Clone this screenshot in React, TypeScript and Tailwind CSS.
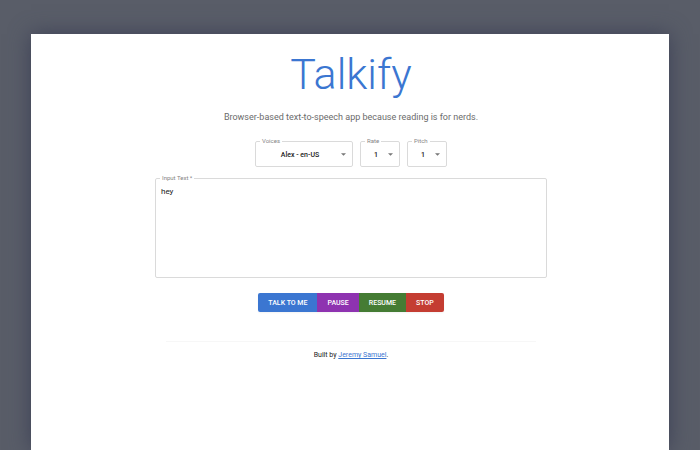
import { ReactNode, useState } from "react";

type FieldProps = { id: string; label: string; className?: string; children: ReactNode };

function Field({ id, label, className = "", children }: FieldProps) {
  return (
    <fieldset className={`min-w-0 rounded-xs border border-[#dadada] ${className}`}>
      <legend className="ml-1 px-0.5 text-[6px] leading-[8px] text-[#858585]">
        <label htmlFor={id} className="block">
          {label}
        </label>
      </legend>
      {children}
    </fieldset>
  );
}

type PickerProps = { id: string; label: string; options: string[]; className: string };

function Picker({ id, label, options, className }: PickerProps) {
  const [value, setValue] = useState(options[0]);
  return (
    <Field id={id} label={label} className={className}>
      <div className="relative">
        <select
          id={id}
          value={value}
          onChange={(e) => setValue(e.target.value)}
          className="block h-[21px] w-full appearance-none bg-transparent pr-3 pl-1 text-center text-[7px] font-medium text-[#222222] outline-none [text-align-last:center]"
        >
          {options.map((o) => (
            <option key={o}>{o}</option>
          ))}
        </select>
        <svg
          viewBox="0 0 6 3"
          className="pointer-events-none absolute top-2 right-1.5 h-[3px] w-[5px] fill-[#777777]"
          aria-hidden="true"
        >
          <path d="M0 0h6L3 3z" />
        </svg>
      </div>
    </Field>
  );
}

const actions = [
  { label: "Talk to me", color: "bg-[#3b76d1]" },
  { label: "Pause", color: "bg-[#8e33b0]" },
  { label: "Resume", color: "bg-[#457c34]" },
  { label: "Stop", color: "bg-[#c43d32]" },
];

export default function App() {
  const [text, setText] = useState("hey");
  return (
    <div className="flex min-h-screen bg-[#595d68] px-[31px] pt-[34px] font-['Roboto','Liberation_Sans',sans-serif]">
      <main className="flex flex-1 flex-col items-center bg-white pt-3 pr-8 pl-[34px] text-[#222222] shadow-[0_0_20px_0_#3c4056]">
        <h1 className="text-[43px] leading-[56px] font-light text-[#3b76d1]">Talkify</h1>
        <p className="mt-2 text-[9px] leading-[14px] text-[#6b6b6b]">
          Browser-based text-to-speech app because reading is for nerds.
        </p>
        <form className="flex w-full max-w-[392px] flex-col items-center" onSubmit={(e) => e.preventDefault()}>
          <div className="mt-[13px] flex gap-[7px]">
            <Picker id="voice" label="Voices" options={["Alex - en-US"]} className="w-[98px]" />
            <Picker id="rate" label="Rate" options={["1", "1.5", "2"]} className="w-[40px]" />
            <Picker id="pitch" label="Pitch" options={["1", "1.5", "2"]} className="w-[40px]" />
          </div>
          <Field id="input-text" label="Input Text *" className="mt-[7px] w-full">
            <textarea
              id="input-text"
              required
              value={text}
              onChange={(e) => setText(e.target.value)}
              className="block h-[95px] w-full resize-none bg-transparent px-[5px] pt-[5px] text-[8px] leading-[10px] outline-none"
            />
          </Field>
          <div className="mt-[15px] flex overflow-hidden rounded-xs shadow-xs">
            {actions.map((a) => (
              <button
                key={a.label}
                type="button"
                className={`h-[19px] px-2.5 text-[7px] leading-[10px] font-medium text-white uppercase ${a.color}`}
              >
                {a.label}
              </button>
            ))}
          </div>
        </form>
        <hr className="mt-[29px] w-full max-w-[370px] border-[#f7f7f7]" />
        <footer className="mt-2 text-[7px] leading-[10px]">
          Built by{" "}
          <a href="#author" className="text-[#3b76d1] underline">
            Jeremy Samuel
          </a>
          .
        </footer>
      </main>
    </div>
  );
}
